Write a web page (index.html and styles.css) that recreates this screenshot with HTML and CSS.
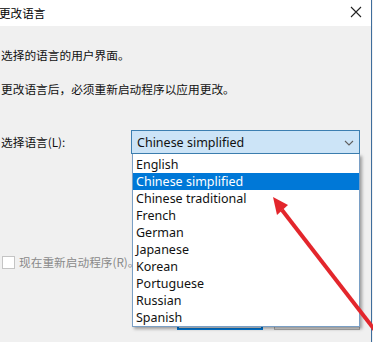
FILE: index.html
```html
<!DOCTYPE html>
<html lang="zh-CN">
<head>
  <meta charset="UTF-8">
  <title>更改语言</title>
  <link rel="stylesheet" href="styles.css">
</head>
<body>

  <div class="window">
    <!-- Title bar -->
    <div class="titlebar">
      <span class="title">更改语言</span>
      <svg class="close" width="12" height="12" viewBox="0 0 12 12">
        <path d="M1 1 L11 11 M11 1 L1 11" stroke="#222" stroke-width="1.1" fill="none"/>
      </svg>
    </div>

    <div class="content">
      <p class="line">选择的语言的用户界面。</p>
      <p class="line second">更改语言后，必须重新启动程序以应用更改。</p>

      <div class="lang-row">
        <label class="lang-label">选择语言(L):</label>
        <div class="combo">
          <div class="combo-box">
            <span>Chinese simplified</span>
            <svg class="chevron" width="10" height="6" viewBox="0 0 10 6">
              <path d="M1 1 L5 5 L9 1" stroke="#606060" stroke-width="1.1" fill="none"/>
            </svg>
          </div>
          <!-- Opened dropdown list -->
          <ul class="combo-list">
            <li>English</li>
            <li class="selected">Chinese simplified</li>
            <li>Chinese traditional</li>
            <li>French</li>
            <li>German</li>
            <li>Japanese</li>
            <li>Korean</li>
            <li>Portuguese</li>
            <li>Russian</li>
            <li>Spanish</li>
          </ul>
        </div>
      </div>

      <label class="restart"><span class="check"></span>现在重新启动程序(R)。</label>

      <div class="buttons">
        <button class="btn primary">确定</button>
        <button class="btn">取消</button>
      </div>
    </div>

    <!-- Red annotation arrow -->
    <svg class="arrow" width="373" height="342" viewBox="0 0 373 342">
      <line x1="282" y1="210" x2="404" y2="368" stroke="#e3262c" stroke-width="4"/>
      <polygon points="273,197 288,205 277,215" fill="#e3262c"/>
    </svg>
  </div>

</body>
</html>
```

FILE: styles.css
```css
body {
  margin: 0;
  padding: 0;
  width: 373px;
  height: 342px;
  overflow: hidden;
  background: #f0f0f0;
  font-family: "Noto Sans CJK SC", "Noto Sans", sans-serif;
  color: #111;
}

/* Dialog window */
.window {
  position: relative;
  width: 371px;
  height: 342px;
  border-right: 1px solid #3e6d9c;
  background: #f0f0f0;
}

.titlebar {
  height: 26px;
  background: #fff;
  display: flex;
  align-items: center;
  justify-content: space-between;
  padding-right: 9px;
}

.title {
  margin-left: -1px;
  font-size: 11.6px;
  color: #000;
}

.close {
  margin-top: -2px;
}

.content {
  padding: 21px 0 0 1px;
  font-size: 11.7px;
}

.line {
  margin: 0;
  line-height: 16px;
}

.line.second {
  margin-top: 18px;
}

/* Language selection row */
.lang-row {
  display: flex;
  align-items: center;
  margin-top: 33px;
}

.lang-label {
  width: 130px;
  line-height: 16px;
}

.combo {
  position: relative;
  width: 229px;
}

.combo-box {
  height: 22px;
  border: 1px solid #3c7fb1;
  background: #cce4f7;
  display: flex;
  align-items: center;
  justify-content: space-between;
  padding: 0 5px 0 5px;
  font-family: "Noto Sans", sans-serif;
  font-size: 12.5px;
  color: #111;
}

.chevron {
  margin-top: 1px;
}

.combo-list {
  position: absolute;
  top: 24px;
  left: 1px;
  width: 226px;
  margin: 0;
  padding: 2px 0 0 0;
  list-style: none;
  background: #fff;
  border: 1px solid #7a9fc5;
  border-top: none;
  box-shadow: 2px 2px 3px rgba(0, 0, 0, 0.35);
  z-index: 5;
  font-family: "Noto Sans", sans-serif;
  font-size: 12.5px;
}

.combo-list li {
  height: 17px;
  line-height: 17px;
  padding-left: 3px;
  color: #111;
}

.combo-list li.selected {
  background: #0078d7;
  color: #fff;
}

/* Disabled restart checkbox */
.restart {
  display: flex;
  align-items: center;
  margin-top: 100px;
  padding-left: 1px;
  line-height: 16px;
  color: #8a8a8a;
  white-space: nowrap;
}

.check {
  width: 11px;
  height: 11px;
  border: 1px solid #c4c4c4;
  background: #fff;
  margin-right: 4px;
}

.buttons {
  display: flex;
  gap: 11px;
  margin-top: 36px;
  padding-left: 176px;
}

.btn {
  width: 86px;
  height: 24px;
  font-family: "Noto Sans CJK SC", sans-serif;
  font-size: 11.7px;
  background: #e1e1e1;
  border: 1px solid #adadad;
  color: #000;
}

.btn.primary {
  border: 2px solid #0078d7;
}

.arrow {
  position: absolute;
  top: 0;
  left: 0;
  z-index: 10;
  pointer-events: none;
}
```
